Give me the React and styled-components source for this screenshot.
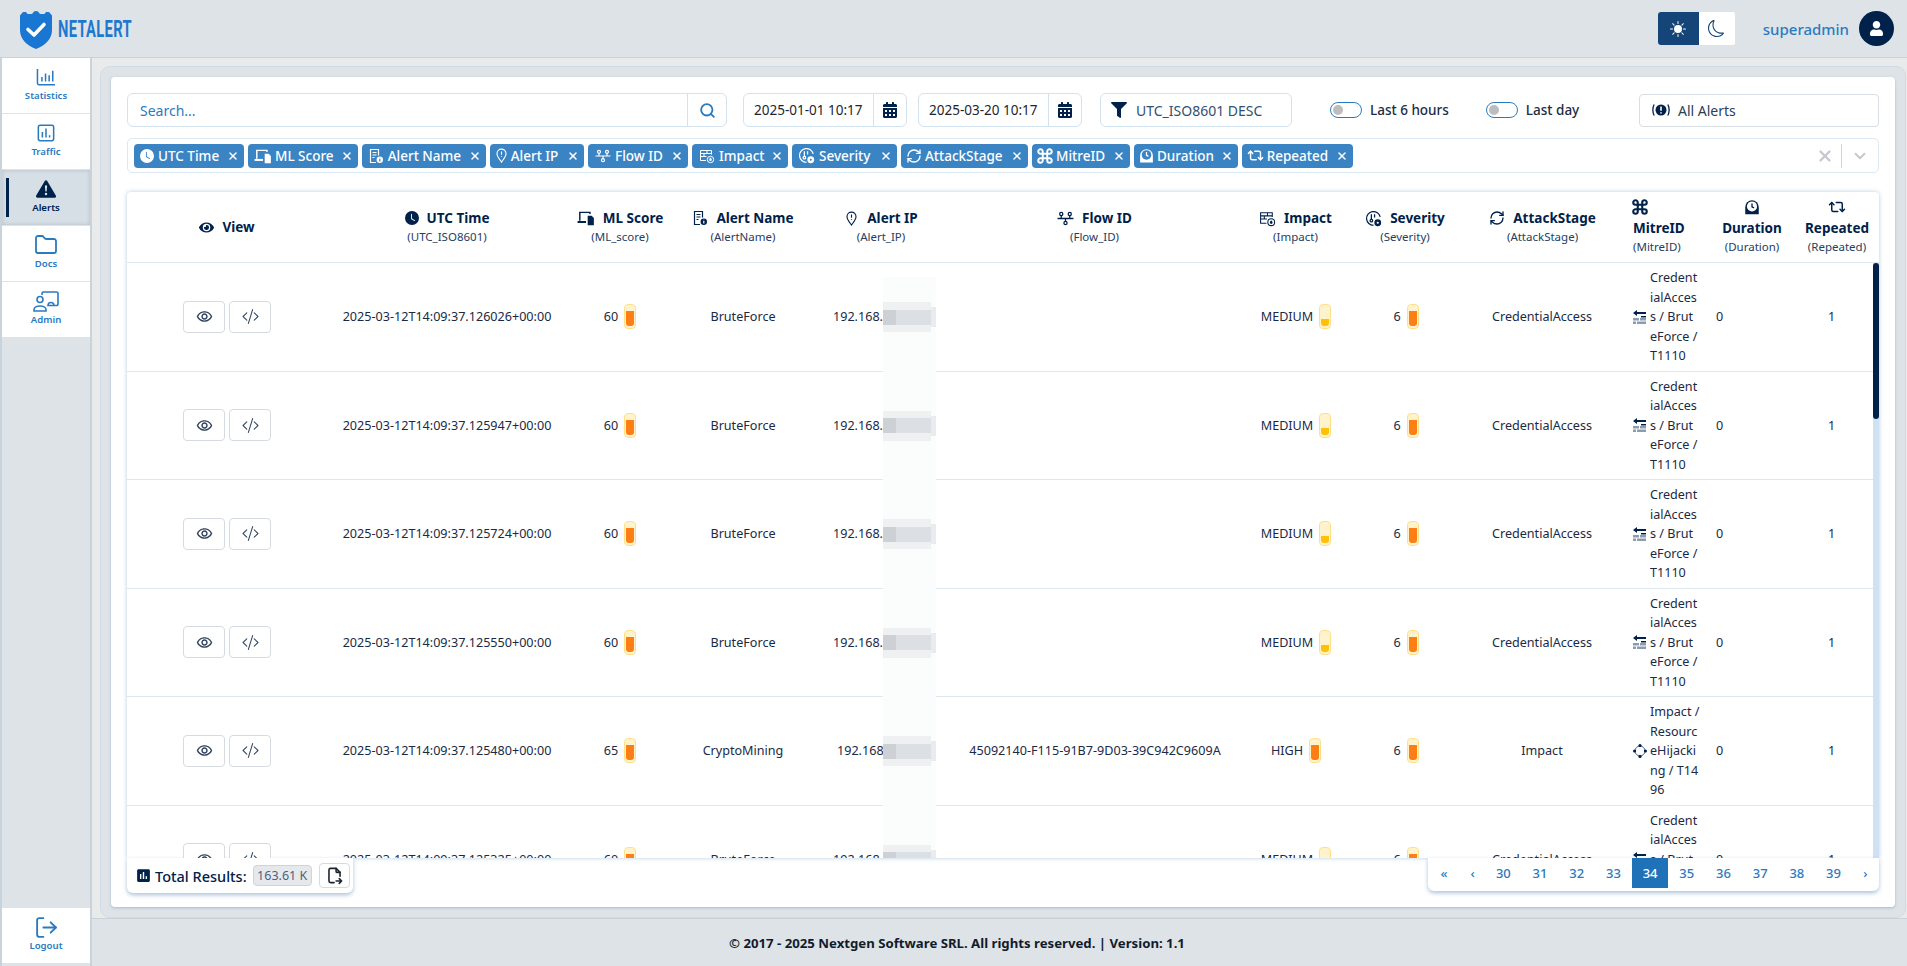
import React from 'react';
import styled, { createGlobalStyle } from 'styled-components';
import { BsClockFill, BsSunFill, BsMoon, BsCodeSlash, BsExclamationTriangleFill } from 'react-icons/bs';
import { FaCalendarAlt, FaFilter, FaUser, FaEye } from 'react-icons/fa';
import { MdInsertChart, MdOutlineRemoveRedEye } from 'react-icons/md';
import { TbFileExport } from 'react-icons/tb';
import { LuCommand, LuFolder, LuLogOut, LuRepeat2, LuRefreshCw, LuChevronDown, LuX, LuSearch } from 'react-icons/lu';

const navy = '#00214a';
const blue = '#2a7abf';
const panel = '#dee3e8';
const FONT = `"Noto Sans", "Open Sans", sans-serif`;

const GlobalStyle = createGlobalStyle`
  html, body { margin: 0; padding: 0; height: 100%; overflow: hidden; }
  body { font-family: ${FONT}; color: ${navy}; background: ${panel}; }
  * { box-sizing: border-box; }
`;

const Svg = ({ size = 16, children, ...rest }) => (
  <svg width={size} height={size} viewBox="0 0 16 16" fill="none" stroke="currentColor" strokeWidth="1.2" {...rest}>{children}</svg>
);

const DevicesIcon = ({ size }) => (
  <Svg size={size}>
    <path d="M2.5 10.5V3h9v1.5" strokeWidth="1.3" />
    <path d="M0.5 11.5h7.5" strokeWidth="1.8" />
    <path d="M9.5 6h3.5l2 2v6.5H9.5z" fill="currentColor" stroke="none" />
  </Svg>
);
const DocInfoIcon = ({ size, hole = '#fff' }) => (
  <Svg size={size}>
    <path d="M8 14.5H2.5v-13h8v6" />
    <path d="M4.5 4.500h4M4.500 7h4M4.500 9.500h2" />
    <circle cx="11.800" cy="11.800" r="3.200" fill="currentColor" stroke="none" />
    <path d="M11.800 11v2.600M11.800 9.800v.5" stroke={hole} />
  </Svg>
);
const PinIcon = ({ size }) => (
  <Svg size={size}>
    <path d="M8 15C5.500 11.500 3.200 8.800 3.200 6a4.800 4.800 0 0 1 9.600 0C12.800 8.800 10.500 11.500 8 15z" />
    <path d="M8 3.800v3.400M8 8.400v1" />
  </Svg>
);
const FlowIcon = ({ size }) => (
  <Svg size={size}>
    <path d="M0.500 8h15M4 8V5M12 8V5M8 8v3" />
    <circle cx="4" cy="3.800" r="1.500" />
    <circle cx="12" cy="3.800" r="1.500" />
    <circle cx="8" cy="12.200" r="1.500" />
  </Svg>
);
const ImpactIcon = ({ size }) => (
  <Svg size={size} strokeWidth="1">
    <path d="M7 12.500H1.500v-10h11v4M1.500 5.500h11M1.500 8.500h6M5 5.500v3M8 2.500v3" />
    <circle cx="11.500" cy="11.500" r="3.200" />
    <path d="M11.500 9.600c-.9 1-1.300 1.600-1.300 2.200a1.300 1.300 0 0 0 2.600 0c0-.6-.4-1.200-1.300-2.200z" fill="currentColor" stroke="none" />
  </Svg>
);
const SeverityIcon = ({ size, hole = '#fff' }) => (
  <Svg size={size}>
    <path d="M8 14.500a6.500 6.500 0 1 1 6.300-8" />
    <path d="M6 4v5M9 4v3" />
    <circle cx="6" cy="10" r="1.200" />
    <circle cx="12" cy="12" r="3.200" fill="currentColor" stroke="none" />
    <circle cx="12" cy="12" r="1" fill={hole} stroke="none" />
  </Svg>
);
const DurationIcon = ({ size, hole = '#fff' }) => (
  <Svg size={size}>
    <path d="M2 14.500V8a6 6 0 0 1 12 0v6.500z" fill="currentColor" stroke="none" />
    <circle cx="8" cy="7.500" r="4.500" fill={hole} stroke="none" />
    <path d="M8 4.800v3l1.800 1" stroke="currentColor" />
  </Svg>
);
const StackArrowIcon = () => (
  <svg width="14" height="14" viewBox="0 0 14 14">
    <path d="M0 3l4-3v2h9v2H4v2z" fill={navy} />
    <rect x="8" y="6" width="5" height="1.500" fill={navy} />
    <rect x="0" y="8" width="6" height="2.500" fill="#8b9bb0" />
    <rect x="7" y="8" width="6" height="2.500" fill="#8b9bb0" />
    <rect x="0" y="11.500" width="3" height="2.500" fill="#8b9bb0" />
    <rect x="4" y="11.500" width="9" height="2.500" fill="#8b9bb0" />
  </svg>
);
const RingIcon = () => (
  <svg width="14" height="14" viewBox="0 0 14 14" fill={navy}>
    <circle cx="7" cy="7" r="5" fill="none" stroke="#51657f" strokeWidth="1" />
    <circle cx="7" cy="1.600" r="1.600" />
    <circle cx="7" cy="12.400" r="1.600" />
    <circle cx="1.600" cy="7" r="1.600" />
    <circle cx="12.400" cy="7" r="1.600" />
  </svg>
);
const AllAlertsIcon = () => (
  <svg width="18" height="14" viewBox="0 0 18 14" fill="none" stroke={navy} strokeWidth="1.300">
    <circle cx="9" cy="7" r="5.500" fill={navy} stroke="none" />
    <path d="M9 3.600v4.200M9 9.200v1.200" stroke="#fff" strokeWidth="1.600" />
    <path d="M2.200 1.500C.4 4.500.4 9.500 2.200 12.500M15.800 1.500c1.800 3 1.800 8 0 11" />
  </svg>
);
const AxisChartIcon = () => (
  <svg width="20" height="18" viewBox="0 0 22 20" fill="none" stroke="currentColor" strokeWidth="1.700">
    <path d="M1.500 1v16a1.500 1.500 0 0 0 1.500 1.500h18" />
    <path d="M6.500 10v5M10.500 6v9M14.500 8v7M18.500 3v12" />
  </svg>
);
const SquareChartIcon = () => (
  <svg width="18" height="18" viewBox="0 0 20 20" fill="none" stroke="currentColor" strokeWidth="1.700">
    <rect x="1.500" y="1.500" width="17" height="17" rx="2" />
    <path d="M6 9v6M10 5v10M14 12.500V15" />
  </svg>
);
const AdminIcon = () => (
  <svg width="26" height="21" viewBox="0 0 26 21" fill="none" stroke="currentColor" strokeWidth="1.600">
    <path d="M9 4V2.500A1.500 1.500 0 0 1 10.500 1h13A1.500 1.500 0 0 1 25 2.500V13a1.500 1.500 0 0 1-1.500 1.500h-2" />
    <circle cx="7" cy="8.500" r="3" />
    <path d="M1 20v-1.500c0-2 2.800-3.500 6-3.500s6 1.500 6 3.500V20z" />
    <path d="M15 14.500c0-1.800 1.200-3 3-3s3 1.200 3 3z" />
  </svg>
);
const LogoShield = () => (
  <svg width="32" height="38" viewBox="0 0 32 38">
    <path d="M3 1h3l1.500 2H12l2-2.500 2-.5 2 .5 2 2.500h4.500L26 1h3l3 3.500V19c0 9-6.500 15.500-16 19C6.500 34.500 0 28 0 19V4.500z" fill="#1976d2" />
    <path d="M8 18.500l6 5.500 10-10.500" fill="none" stroke="#fff" strokeWidth="3.600" strokeLinecap="round" strokeLinejoin="round" />
  </svg>
);

const Page = styled.div`
  height: 100vh;
  display: flex;
  flex-direction: column;
`;

const TopBar = styled.header`
  height: 58px;
  flex: none;
  display: flex;
  align-items: center;
  padding: 0 13px 0 20px;
  background: ${panel};
  border-bottom: 1px solid #c9d1d9;
`;

const Logo = styled.div`
  display: flex;
  align-items: center;
  gap: 6px;
  margin-top: 3px;
`;

const LogoText = styled.span`
  display: inline-block;
  width: 72px;
  font: 700 23px/1 "Roboto", sans-serif;
  color: #1f78cf;
  transform: scaleX(0.64);
  transform-origin: left center;
  white-space: nowrap;
  letter-spacing: 0.5px;
  margin-top: -2px;
`;

const TopRight = styled.div`
  margin-left: auto;
  display: flex;
  align-items: center;
`;

const ThemeSwitch = styled.div`
  display: flex;
  height: 33px;
  margin-right: 28px;
  border-radius: 3px;
  overflow: hidden;
  background: #fff;
`;

const ThemeBtn = styled.div`
  width: ${p => (p.$on ? 41 : 36)}px;
  display: flex;
  align-items: center;
  justify-content: center;
  font-size: 16px;
  background: ${p => (p.$on ? '#154578' : '#fff')};
  color: ${p => (p.$on ? '#fff' : '#154578')};
`;

const UserName = styled.span`
  font-size: 15px;
  font-weight: 500;
  color: ${blue};
  margin-right: 10px;
`;

const Avatar = styled.div`
  width: 35px;
  height: 35px;
  border-radius: 50%;
  background: ${navy};
  color: #fff;
  display: flex;
  align-items: center;
  justify-content: center;
  font-size: 15px;
`;

const Body = styled.div`
  flex: 1;
  min-height: 0;
  display: flex;
`;

const Sidebar = styled.nav`
  width: 92px;
  flex: none;
  display: flex;
  flex-direction: column;
  background: ${panel};
  border-left: 2px solid #c9d3dc;
  border-right: 2px solid #c9d3dc;
  padding-bottom: 2px;
`;

const NavItem = styled.div`
  position: relative;
  height: 56px;
  flex: none;
  display: flex;
  flex-direction: column;
  align-items: center;
  gap: 1px;
  padding-top: 8px;
  background: ${p => (p.$active ? '#d6dee6' : '#fff')};
  color: ${p => (p.$active ? navy : blue)};
  border-bottom: 1px solid ${panel};
  font-size: 9.6px;
  line-height: 14px;
  font-weight: 600;
  margin-top: ${p => (p.$bottom ? 'auto' : '0')};
  box-shadow: ${p => (p.$active ? 'inset 0 0 4px rgba(0,0,0,.15)' : 'none')};

  ${p => p.$active && `
    &::before {
      content: '';
      position: absolute;
      left: 4px;
      top: 8px;
      bottom: 8px;
      width: 3px;
      background: ${navy};
    }
  `}
`;

const NavIcon = styled.div`
  height: 22px;
  display: flex;
  align-items: center;
  justify-content: center;
`;

const Main = styled.main`
  flex: 1;
  min-width: 0;
  display: flex;
  flex-direction: column;
  background: #e9eaea;
`;

const Panel = styled.div`
  flex: 1;
  min-height: 0;
  margin: 8px 1px 0 8px;
  padding: 10px;
  background: ${panel};
  border: 1px solid #cfdbe6;
  border-radius: 10px;
  display: flex;
`;

const Card = styled.div`
  flex: 1;
  min-width: 0;
  padding: 16px 16px 14px;
  background: #fff;
  border-radius: 4px;
  box-shadow: 0 1px 3px rgba(70, 110, 150, .35);
  display: flex;
  flex-direction: column;
`;

const Footer = styled.footer`
  height: 47px;
  flex: none;
  margin-left: -85px;
  display: flex;
  align-items: center;
  justify-content: center;
  font-size: 13.2px;
  font-weight: 700;
  color: #101c2c;
`;

const FooterBar = styled.div`
  flex: none;
  background: ${panel};
  border-top: 1px solid #c9d1d9;
`;

const Toolbar = styled.div`
  height: 34px;
  flex: none;
  display: flex;
  align-items: center;
`;

const Field = styled.div`
  width: ${p => p.$w}px;
  height: 34px;
  flex: none;
  display: flex;
  margin-right: ${p => p.$mr || 0}px;
  background: #fff;
  border: 1px solid #d3e2ef;
  border-radius: 6px;
  overflow: hidden;
`;

const FieldText = styled.div`
  flex: 1;
  display: flex;
  align-items: center;
  padding-left: ${p => p.$pl || 10}px;
  font-size: ${p => p.$size || 14}px;
  color: ${p => p.$color || '#1c2530'};
  white-space: nowrap;
`;

const FieldBtn = styled.div`
  width: ${p => p.$w || 33}px;
  flex: none;
  display: flex;
  align-items: center;
  justify-content: center;
  font-size: ${p => p.$size || 16}px;
  color: ${p => p.$color || navy};
  border-left: 1px solid #d3e2ef;
`;

const SortField = styled(Field)`
  align-items: center;
  padding-left: 10px;
  gap: 9px;
  font-size: 14px;
  color: #34506e;
  svg { color: ${navy}; font-size: 16px; }
`;

const ToggleWrap = styled.label`
  display: flex;
  align-items: center;
  gap: 8px;
  margin-left: ${p => p.$ml}px;
  font-size: 13.5px;
  font-weight: 500;
  color: #1b2c44;
  white-space: nowrap;
`;

const ToggleTrack = styled.span`
  width: 32px;
  height: 16px;
  display: block;
  padding: 2px;
  background: #fff;
  border: 1px solid ${blue};
  border-radius: 8px;

  &::before {
    content: '';
    display: block;
    width: 10px;
    height: 10px;
    border-radius: 50%;
    background: #bdbdbd;
  }
`;

const AlertSelect = styled.div`
  width: 240px;
  height: 33px;
  margin-left: auto;
  display: flex;
  align-items: center;
  gap: 8px;
  padding-left: 12px;
  font-size: 14px;
  color: #2a3f5a;
  border: 1px solid #d8dee4;
  border-radius: 4px;
`;

const ChipBox = styled.div`
  height: 35px;
  flex: none;
  margin-top: 11px;
  padding: 0 0 0 6px;
  display: flex;
  align-items: center;
  gap: 4px;
  border: 1px solid #dce8f2;
  border-radius: 5px;
`;

const Chip = styled.div`
  width: ${p => p.$w}px;
  height: 24px;
  flex: none;
  display: flex;
  align-items: center;
  gap: 4px;
  padding: 0 5px 0 6px;
  background: #3a84c4;
  color: #fff;
  border-radius: 4px;
  font-size: 13.5px;
  font-weight: 500;
  white-space: nowrap;
`;

const ChipIcon = styled.span`
  width: ${p => p.$w}px;
  flex: none;
  display: flex;
  justify-content: center;
  svg { flex: none; }
`;

const ChipLabel = styled.span`
  flex: 1;
`;

const ChipClose = styled.span`
  display: flex;
`;

const ChipTools = styled.div`
  margin-left: auto;
  margin-right: 9px;
  height: 24px;
  display: flex;
  align-items: center;
  color: #c5c9cd;
`;

const ToolSep = styled.span`
  width: 1px;
  height: 24px;
  margin: 0 9px 0 7px;
  background: #cdd3d9;
`;

const TableCard = styled.div`
  flex: 1;
  min-height: 0;
  margin-top: 19px;
  display: flex;
  flex-direction: column;
  border-radius: 4px 4px 0 0;
  box-shadow: 0 0 4px rgba(90, 140, 190, .45);
  overflow: hidden;
`;

const HEAD_COLS = '200px 240px 106px 140px 136px 291px 111px 108px 167px 83px 86px 84px';
const ROW_COLS = '200px 240px 106px 140px 144px 276px 126px 94px 178px 72px 87px 83px';

const HeadRow = styled.div`
  height: 71px;
  flex: none;
  display: grid;
  grid-template-columns: ${HEAD_COLS};
  border-bottom: 1px solid #dce8f2;
`;

const HeadCell = styled.div`
  display: flex;
  flex-direction: column;
  align-items: ${p => (p.$left ? 'flex-start' : 'center')};
  justify-content: center;
  padding-left: ${p => (p.$left ? 7 : 0)}px;
  min-width: 0;
  white-space: nowrap;
`;

const HeadTitle = styled.div`
  display: flex;
  flex-direction: ${p => (p.$stack ? 'column' : 'row')};
  align-items: ${p => (p.$left ? 'flex-start' : 'center')};
  gap: ${p => (p.$stack ? 2 : 8)}px;
  font-size: 13.5px;
  font-weight: 700;
  line-height: 20px;
  color: ${navy};
  svg { margin-left: ${p => (p.$left ? -2 : 0)}px; }
`;

const HeadSub = styled.div`
  font-size: 11.5px;
  line-height: 18px;
  color: #26405f;
`;

const TableBody = styled.div`
  flex: 1;
  min-height: 0;
  display: flex;
`;

const RowsWrap = styled.div`
  position: relative;
  flex: 1;
  min-width: 0;
  overflow: hidden;
`;

const ScrollTrack = styled.div`
  width: 6px;
  flex: none;
  background: #cfe2f3;
`;

const ScrollThumb = styled.div`
  height: 156px;
  background: ${navy};
  border-radius: 4px;
`;

const Row = styled.div`
  display: grid;
  grid-template-columns: ${ROW_COLS};
  border-bottom: 1px solid #dfe8f1;
`;

const Cell = styled.div`
  display: flex;
  align-items: center;
  justify-content: ${p => p.$align || 'center'};
  gap: ${p => (p.$gap !== undefined ? p.$gap : 6)}px;
  padding: 5px 0;
  padding-left: ${p => p.$pl || 0}px;
  font-size: 12.6px;
  line-height: 19.5px;
  color: #1a2a44;
  white-space: nowrap;
  min-width: 0;
`;

const ActionBtn = styled.div`
  width: 41.5px;
  height: 32px;
  display: flex;
  align-items: center;
  justify-content: center;
  border: 1px solid #d5dbe1;
  border-radius: 4px;
  color: #33465e;
  font-size: 17px;
  background: #fff;
`;

const Bar = styled.span`
  width: 12px;
  height: 25px;
  display: flex;
  align-items: flex-end;
  padding: 2px 1px;
  background: #fff3cd;
  border: 1px solid #ffe08a;
  border-radius: 4px;
`;

const BarFill = styled.span`
  display: block;
  width: 100%;
  background: ${p => p.$color};
  border-radius: 0 0 3px 3px;
`;

const MitreText = styled.div`
  width: ${p => p.$w}px;
  white-space: normal;
  word-break: break-all;
`;

const BlurStrip = styled.div`
  position: absolute;
  left: 756px;
  top: 14px;
  width: 53px;
  height: 700px;
  padding-top: 25px;
  background: #fbfcfc;
  pointer-events: none;
`;

const Blob = styled.div`
  height: 30px;
  margin-bottom: 78.5px;
  display: flex;
  align-items: center;
  background: linear-gradient(to right, #eef0f2 48px, transparent 48px);
`;

const BlobDark = styled.span`
  width: 13px;
  height: 15px;
  background: #cdd0d5;
`;

const BlobMid = styled.span`
  width: 35px;
  height: 15px;
  background: #dcdfe4;
`;

const BlobEdge = styled.span`
  width: 5px;
  height: 20px;
  background: #e9ebee;
`;

const BottomRow = styled.div`
  height: 35px;
  flex: none;
  display: flex;
  justify-content: space-between;
  align-items: flex-start;
`;

const TotalBox = styled.div`
  width: 226px;
  height: 35px;
  display: flex;
  align-items: center;
  gap: 3px;
  padding-left: 8px;
  background: #fff;
  border-radius: 0 0 6px 6px;
  box-shadow: 0 2px 4px rgba(70, 120, 170, .45);
  font-size: 14.5px;
  font-weight: 500;
  color: ${navy};
  white-space: nowrap;
  svg { flex: none; }
`;

const CountBadge = styled.span`
  height: 21px;
  width: 59px;
  margin-left: 3px;
  display: flex;
  align-items: center;
  justify-content: center;
  background: #e6e9ec;
  border: 1px solid #ced4da;
  border-radius: 4px;
  font-size: 12.5px;
  font-weight: 400;
  color: #4a6280;
`;

const ExportBtn = styled.div`
  width: 31px;
  height: 25px;
  margin-left: 4px;
  display: flex;
  align-items: center;
  justify-content: center;
  border: 1px solid #d5dbe1;
  border-radius: 4px;
  font-size: 19px;
  color: #1c2530;
`;

const Pager = styled.div`
  width: 451px;
  height: 33px;
  display: flex;
  align-items: flex-start;
  background: #fff;
  border-radius: 0 0 6px 6px;
  box-shadow: 0 2px 4px rgba(70, 120, 170, .45);
`;

const PageItem = styled.div`
  width: ${p => p.$w || 36.7}px;
  height: 30px;
  flex: none;
  display: flex;
  align-items: center;
  justify-content: center;
  font-size: 13px;
  font-weight: 500;
  color: ${p => (p.$active ? '#fff' : blue)};
  background: ${p => (p.$active ? '#1f72b8' : 'transparent')};
`;

const navItems = [
  { label: 'Statistics', icon: <AxisChartIcon /> },
  { label: 'Traffic', icon: <SquareChartIcon /> },
  { label: 'Alerts', icon: <BsExclamationTriangleFill size={20} />, active: true },
  { label: 'Docs', icon: <LuFolder size={24} strokeWidth={1.8} /> },
  { label: 'Admin', icon: <AdminIcon /> },
];

const chips = [
  { label: 'UTC Time', w: 110, iw: 14, icon: <BsClockFill size={14} /> },
  { label: 'ML Score', w: 110, iw: 17, icon: <DevicesIcon size={18} /> },
  { label: 'Alert Name', w: 124, iw: 15.7, icon: <DocInfoIcon size={16} hole="#3a84c4" /> },
  { label: 'Alert IP', w: 94, iw: 10.7, icon: <PinIcon size={15} /> },
  { label: 'Flow ID', w: 100, iw: 17, icon: <FlowIcon size={16} /> },
  { label: 'Impact', w: 96, iw: 17, icon: <ImpactIcon size={16} /> },
  { label: 'Severity', w: 105, iw: 17, icon: <SeverityIcon size={17} hole="#3a84c4" /> },
  { label: 'AttackStage', w: 127, iw: 14, icon: <LuRefreshCw size={16} /> },
  { label: 'MitreID', w: 98, iw: 14, icon: <LuCommand size={18} strokeWidth={2.6} /> },
  { label: 'Duration', w: 104, iw: 13, icon: <DurationIcon size={17} hole="#3a84c4" /> },
  { label: 'Repeated', w: 111, iw: 14.7, icon: <LuRepeat2 size={17} /> },
];

const columns = [
  { title: 'View', icon: <FaEye size={15} /> },
  { title: 'UTC Time', sub: 'UTC_ISO8601', icon: <BsClockFill size={14} /> },
  { title: 'ML Score', sub: 'ML_score', icon: <DevicesIcon size={18} /> },
  { title: 'Alert Name', sub: 'AlertName', icon: <DocInfoIcon size={16} /> },
  { title: 'Alert IP', sub: 'Alert_IP', icon: <PinIcon size={15} /> },
  { title: 'Flow ID', sub: 'Flow_ID', icon: <FlowIcon size={17} /> },
  { title: 'Impact', sub: 'Impact', icon: <ImpactIcon size={17} /> },
  { title: 'Severity', sub: 'Severity', icon: <SeverityIcon size={17} /> },
  { title: 'AttackStage', sub: 'AttackStage', icon: <LuRefreshCw size={16} /> },
  { title: 'MitreID', sub: 'MitreID', icon: <LuCommand size={18} strokeWidth={2.8} />, stack: true, left: true },
  { title: 'Duration', sub: 'Duration', icon: <DurationIcon size={18} />, stack: true },
  { title: 'Repeated', sub: 'Repeated', icon: <LuRepeat2 size={18} />, stack: true },
];

const brute = { name: 'BruteForce', ml: 60, impact: 'MEDIUM', stage: 'CredentialAccess', mitre: 'CredentialAccess / BruteForce / T1110', mitreW: 48, flow: '', pl: 20 };
const crypto = { name: 'CryptoMining', ml: 65, impact: 'HIGH', stage: 'Impact', mitre: 'Impact / ResourceHijacking / T1496', mitreW: 52, flow: '45092140-F115-91B7-9D03-39C942C9609A', pl: 24, ring: true };

const stamps = ['126026', '125947', '125724', '125550', '125480', '125325'];
const rows = stamps.map((s, i) => ({ ...(i === 4 ? crypto : brute), time: `2025-03-12T14:09:37.${s}+00:00` }));

const pages = [30, 31, 32, 33, 34, 35, 36, 37, 38, 39];

const Level = ({ color, h }) => (
  <Bar><BarFill $color={color} style={{ height: h }} /></Bar>
);

const App = () => (
  <Page>
    <GlobalStyle />
    <TopBar>
      <Logo>
        <LogoShield />
        <LogoText>NETALERT</LogoText>
      </Logo>
      <TopRight>
        <ThemeSwitch>
          <ThemeBtn $on><BsSunFill /></ThemeBtn>
          <ThemeBtn><BsMoon size={17} /></ThemeBtn>
        </ThemeSwitch>
        <UserName>superadmin</UserName>
        <Avatar><FaUser /></Avatar>
      </TopRight>
    </TopBar>
    <Body>
      <Sidebar>
        {navItems.map(item => (
          <NavItem key={item.label} $active={item.active}>
            <NavIcon>{item.icon}</NavIcon>
            {item.label}
          </NavItem>
        ))}
        <NavItem $bottom>
          <NavIcon><LuLogOut size={25} strokeWidth={1.8} /></NavIcon>
          Logout
        </NavItem>
      </Sidebar>
      <Main>
        <Panel>
          <Card>
            <Toolbar>
              <Field $w={600} $mr={16}>
                <FieldText $color={blue} $pl={12}>Search...</FieldText>
                <FieldBtn $w={39} $color={blue}><LuSearch size={17} strokeWidth={2.6} /></FieldBtn>
              </Field>
              <Field $w={164} $mr={11}>
                <FieldText $size={13.5}>2025-01-01 10:17</FieldText>
                <FieldBtn><FaCalendarAlt /></FieldBtn>
              </Field>
              <Field $w={164} $mr={18}>
                <FieldText $size={13.5}>2025-03-20 10:17</FieldText>
                <FieldBtn><FaCalendarAlt /></FieldBtn>
              </Field>
              <SortField $w={192}>
                <FaFilter />
                UTC_ISO8601 DESC
              </SortField>
              <ToggleWrap $ml={38}><ToggleTrack />Last 6 hours</ToggleWrap>
              <ToggleWrap $ml={37}><ToggleTrack />Last day</ToggleWrap>
              <AlertSelect><AllAlertsIcon />All Alerts</AlertSelect>
            </Toolbar>

            <ChipBox>
              {chips.map(c => (
                <Chip key={c.label} $w={c.w}>
                  <ChipIcon $w={c.iw}>{c.icon}</ChipIcon>
                  <ChipLabel>{c.label}</ChipLabel>
                  <ChipClose><LuX size={12} strokeWidth={3} /></ChipClose>
                </Chip>
              ))}
              <ChipTools>
                <LuX size={18} strokeWidth={3} />
                <ToolSep />
                <LuChevronDown size={18} strokeWidth={2.5} />
              </ChipTools>
            </ChipBox>

            <TableCard>
              <HeadRow>
                {columns.map(c => (
                  <HeadCell key={c.title} $left={c.left}>
                    <HeadTitle $stack={c.stack} $left={c.left}>
                      {c.icon}
                      <span>{c.title}</span>
                    </HeadTitle>
                    {c.sub && <HeadSub>({c.sub})</HeadSub>}
                  </HeadCell>
                ))}
              </HeadRow>
              <TableBody>
                <RowsWrap>
                  {rows.map(r => (
                    <Row key={r.time}>
                      <Cell $gap={4.5}>
                        <ActionBtn><MdOutlineRemoveRedEye /></ActionBtn>
                        <ActionBtn><BsCodeSlash /></ActionBtn>
                      </Cell>
                      <Cell>{r.time}</Cell>
                      <Cell>{r.ml}<Level color="#fd7e14" h={15} /></Cell>
                      <Cell>{r.name}</Cell>
                      <Cell $align="flex-start" $pl={r.pl}>192.168.</Cell>
                      <Cell>{r.flow}</Cell>
                      <Cell>
                        {r.impact}
                        {r.impact === 'HIGH' ? <Level color="#fd7e14" h={15} /> : <Level color="#ffc107" h={7} />}
                      </Cell>
                      <Cell>6<Level color="#fd7e14" h={15} /></Cell>
                      <Cell>{r.stage}</Cell>
                      <Cell $align="flex-start" $pl={2} $gap={3}>
                        {r.ring ? <RingIcon /> : <StackArrowIcon />}
                        <MitreText $w={r.mitreW}>{r.mitre}</MitreText>
                      </Cell>
                      <Cell $align="flex-start" $pl={13}>0</Cell>
                      <Cell>1</Cell>
                    </Row>
                  ))}
                  <BlurStrip>
                    {rows.map(r => (
                      <Blob key={r.time}><BlobDark /><BlobMid /><BlobEdge /></Blob>
                    ))}
                  </BlurStrip>
                </RowsWrap>
                <ScrollTrack><ScrollThumb /></ScrollTrack>
              </TableBody>
            </TableCard>

            <BottomRow>
              <TotalBox>
                <MdInsertChart size={17} />
                Total Results:
                <CountBadge>163.61 K</CountBadge>
                <ExportBtn><TbFileExport /></ExportBtn>
              </TotalBox>
              <Pager>
                <PageItem $w={32}>«</PageItem>
                <PageItem $w={25}>‹</PageItem>
                {pages.map(n => (
                  <PageItem key={n} $active={n === 34}>{n}</PageItem>
                ))}
                <PageItem $w={27}>›</PageItem>
              </Pager>
            </BottomRow>
          </Card>
        </Panel>
        <FooterBar>
          <Footer>© 2017 - 2025 Nextgen Software SRL. All rights reserved. | Version: 1.1</Footer>
        </FooterBar>
      </Main>
    </Body>
  </Page>
);

export default App;
